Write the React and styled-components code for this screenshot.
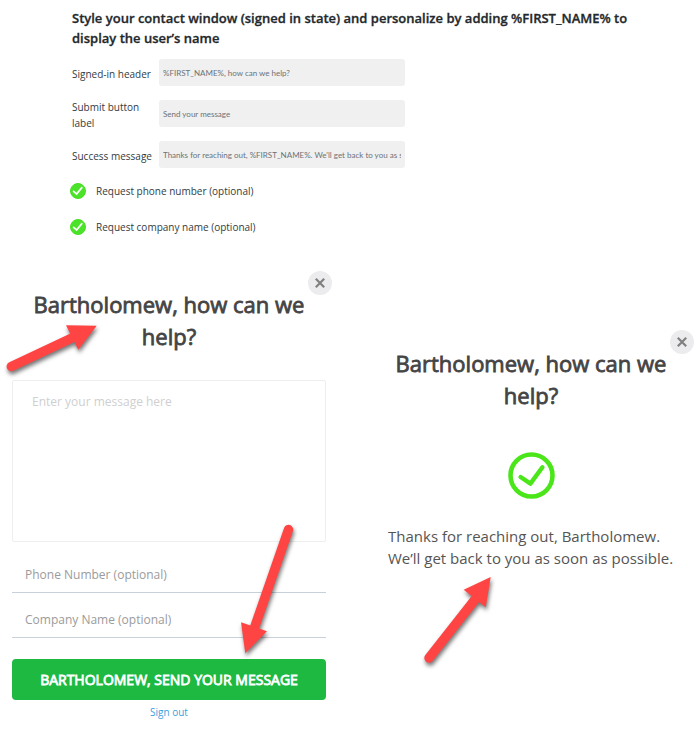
import React, { useState } from 'react';
import styled, { createGlobalStyle } from 'styled-components';

const GlobalStyle = createGlobalStyle`
  *, *::before, *::after {
    box-sizing: border-box;
  }

  body {
    margin: 0;
    background: #fff;
    font-family: 'Open Sans', 'Noto Sans', sans-serif;
  }

  input, textarea, button {
    font-family: inherit;
  }
`;

const Page = styled.main`
  padding: 8px 12px;
`;

const Settings = styled.form`
  padding: 0 48px 0 60px;
  color: #333b41;
`;

const SettingsTitle = styled.h2`
  margin: 0 0 4px;
  font-size: 13px;
  line-height: 20px;
  font-weight: 600;
  color: #23282c;
  -webkit-text-stroke: 0.3px #23282c;
`;

const SettingRow = styled.div`
  display: grid;
  grid-template-columns: 87px minmax(0, 246px);
  align-items: center;
  height: 41px;
`;

const SettingLabel = styled.label`
  padding-top: 3px;
  font-size: 10px;
  line-height: 16px;
`;

const SettingInput = styled.input`
  width: 100%;
  height: 27px;
  padding: 0 4px;
  border: 0;
  border-radius: 3px;
  background: #f0f0f0;
  color: #6b7378;
  font-family: Lato, 'Open Sans', sans-serif;
  font-size: 8px;
`;

const Options = styled.div`
  display: grid;
  gap: 20px;
  margin-top: 8px;
`;

const Option = styled.label`
  display: flex;
  align-items: center;
  gap: 10px;
  font-size: 10px;
  line-height: 16px;
`;

const Tick = styled.span`
  display: grid;
  width: 16px;
  height: 16px;
  margin-left: -2px;

  > * {
    grid-area: 1 / 1;
  }

  svg {
    pointer-events: none;
  }
`;

const TickInput = styled.input`
  appearance: none;
  width: 16px;
  height: 16px;
  margin: 0;
  border: 1px solid #4ade24;
  border-radius: 50%;

  &:checked {
    background: #4be32a;
  }
`;

const Widgets = styled.div`
  display: grid;
  grid-template-columns: repeat(2, minmax(0, 1fr));
  align-items: start;
  column-gap: 48px;
  margin-top: 36px;
`;

const Widget = styled.section`
  position: relative;
  margin-top: ${props => props.$drop || 0}px;
  padding-top: 17px;
`;

const CloseButton = styled.button`
  position: absolute;
  top: 0;
  right: -6px;
  display: flex;
  align-items: center;
  justify-content: center;
  width: 24px;
  height: 24px;
  padding: 0;
  border: 0;
  border-radius: 50%;
  background: #ececee;
`;

const WidgetTitle = styled.h1`
  margin: 0;
  padding: 0 16px;
  font-size: 22px;
  line-height: 32px;
  font-weight: 400;
  text-align: center;
  color: #444;
  -webkit-text-stroke: 0.8px #444;
`;

const ContactForm = styled.form`
  display: flex;
  flex-direction: column;
  margin-top: 28px;
`;

const Message = styled.textarea`
  height: 162px;
  padding: 12px 19px;
  border: 1px solid #eee;
  border-radius: 2px;
  resize: none;
  font-size: 12px;
  line-height: 18px;

  &::placeholder {
    color: #cfcfcf;
  }
`;

const LineInput = styled.input`
  height: 34px;
  margin-top: ${props => props.$gap}px;
  padding: 0 13px 2px;
  border: 0;
  border-bottom: 1px solid #c8d0da;
  background: transparent;
  font-size: 12px;

  &::placeholder {
    color: #9b9b9b;
  }
`;

const SubmitButton = styled.button`
  height: 41px;
  margin-top: 21px;
  border: 0;
  border-radius: 4px;
  background: #1db941;
  color: #fff;
  font-size: 14px;
  font-weight: 400;
  text-transform: uppercase;
  -webkit-text-stroke: 0.8px #fff;
`;

const SignOut = styled.a`
  align-self: center;
  margin-top: 4px;
  font-size: 10px;
  line-height: 16px;
  color: #3ba0dc;
  text-decoration: none;
`;

const Success = styled.div`
  display: flex;
  flex-direction: column;
  align-items: center;
  gap: 26px;
  margin-top: 41px;
`;

const SuccessText = styled.p`
  max-width: 286px;
  margin: 0;
  font-size: 15px;
  line-height: 22px;
  color: #555;
`;

const ArrowLayer = styled.svg`
  position: absolute;
  top: 0;
  left: 0;
  width: 314px;
  height: 440px;
  overflow: visible;
  pointer-events: none;
  filter: drop-shadow(1px 3px 2px rgba(0, 0, 0, 0.55));
`;

const Close = () => (
  <CloseButton type="button" aria-label="Close">
    <svg width="10" height="10" viewBox="0 0 10 10" fill="none" stroke="#808080" strokeWidth="2.2">
      <path d="M.8 .8l8.4 8.4M9.2 .8L.8 9.2" />
    </svg>
  </CloseButton>
);

const Arrow = ({ shaft, head }) => (
  <g>
    <path d={shaft} fill="none" stroke="#ff4444" strokeWidth="9.4" strokeLinecap="round" />
    <path d={head} fill="#ff4444" />
  </g>
);

const TickOption = ({ children }) => {
  const [checked, setChecked] = useState(true);

  return (
    <Option>
      <Tick>
        <TickInput type="checkbox" checked={checked} onChange={() => setChecked(!checked)} />
        {checked && (
          <svg width="16" height="16" viewBox="0 0 16 16" fill="none" stroke="#fff" strokeWidth="1.7" strokeLinecap="round">
            <path d="M3.6 8.4l3 2.6 5.2-6.4" />
          </svg>
        )}
      </Tick>
      {children}
    </Option>
  );
};

const settings = [
  { id: 'header', label: 'Signed-in header', value: '%FIRST_NAME%, how can we help?' },
  { id: 'submit', label: 'Submit button label', value: 'Send your message' },
  {
    id: 'success',
    label: 'Success message',
    value: 'Thanks for reaching out, %FIRST_NAME%. We\'ll get back to you as soon as possible.'
  }
];

const App = () => (
  <Page>
    <GlobalStyle />
    <Settings>
      <SettingsTitle>
        Style your contact window (signed in state) and personalize by adding %FIRST_NAME% to
        display the user’s name
      </SettingsTitle>
      {settings.map(({ id, label, value }) => (
        <SettingRow key={id}>
          <SettingLabel htmlFor={id}>{label}</SettingLabel>
          <SettingInput id={id} defaultValue={value} />
        </SettingRow>
      ))}
      <Options>
        <TickOption>Request phone number (optional)</TickOption>
        <TickOption>Request company name (optional)</TickOption>
      </Options>
    </Settings>

    <Widgets>
      <Widget>
        <Close />
        <WidgetTitle>Bartholomew, how can we help?</WidgetTitle>
        <ContactForm>
          <Message placeholder="Enter your message here" aria-label="Message" />
          <LineInput $gap={17} placeholder="Phone Number (optional)" aria-label="Phone number" />
          <LineInput $gap={11} placeholder="Company Name (optional)" aria-label="Company name" />
          <SubmitButton type="button">Bartholomew, send your message</SubmitButton>
          <SignOut href="#">Sign out</SignOut>
        </ContactForm>
        <ArrowLayer viewBox="0 0 314 440">
          <Arrow shaft="M-.7 95.5L62 66" head="M54 54.3L84.7 54.7 66.3 78.7Z" />
          <Arrow shaft="M276.5 258.5L242 358" head="M229 351.3L255 360.3 233.3 382.3Z" />
        </ArrowLayer>
      </Widget>

      <Widget $drop={59}>
        <Close />
        <WidgetTitle>Bartholomew, how can we help?</WidgetTitle>
        <Success>
          <svg width="47" height="47" viewBox="0 0 47 47" fill="none" stroke="#4be61a" strokeLinecap="round" strokeLinejoin="round">
            <circle cx="23.5" cy="23.5" r="21" strokeWidth="4.6" />
            <path d="M12.6 25l9.8 6.6L34.4 15.2" strokeWidth="4.4" />
          </svg>
          <SuccessText>
            Thanks for reaching out, Bartholomew. We’ll get back to you as soon as possible.
          </SuccessText>
        </Success>
        <ArrowLayer viewBox="0 0 314 440">
          <Arrow shaft="M55 328L103 267" head="M89.7 259.7L116.7 247 111.7 277.3Z" />
        </ArrowLayer>
      </Widget>
    </Widgets>
  </Page>
);

export default App;
